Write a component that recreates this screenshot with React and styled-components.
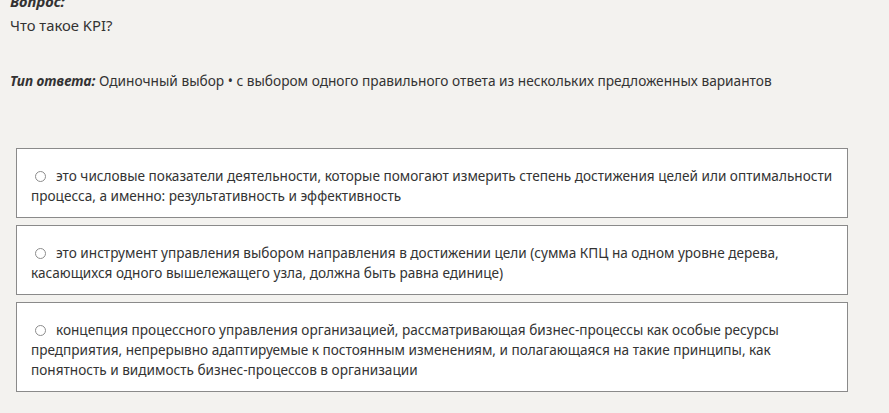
import React from 'react'
import styled, { createGlobalStyle } from 'styled-components'

const GlobalStyle = createGlobalStyle`
  html, body {
    margin: 0;
    padding: 0;
    background: #f3f2ef;
  }
  body {
    font-family: "Noto Sans", "Open Sans", sans-serif;
    color: #333;
  }
`

const answers = [
  'это числовые показатели деятельности, которые помогают измерить степень достижения целей или оптимальности процесса, а именно: результативность и эффективность',
  'это инструмент управления выбором направления в достижении цели (сумма КПЦ на одном уровне дерева, касающихся одного вышележащего узла, должна быть равна единице)',
  'концепция процессного управления организацией, рассматривающая бизнес-процессы как особые ресурсы предприятия, непрерывно адаптируемые к постоянным изменениям, и полагающаяся на такие принципы, как понятность и видимость бизнес-процессов в организации',
]

function App() {
  return (
    <Page>
      <GlobalStyle />
      <Question>
        <Label>Вопрос:</Label>
        <QuestionText>Что такое KPI?</QuestionText>
      </Question>
      <AnswerType>
        <Label>Тип ответа:</Label> Одиночный выбор • с выбором одного правильного ответа из нескольких предложенных вариантов
      </AnswerType>
      <Options>
        {answers.map((text) => (
          <Option key={text}>
            <Radio />
            {text}
          </Option>
        ))}
      </Options>
    </Page>
  )
}

export default App

const Page = styled.div`
  width: 889px;
  height: 413px;
  overflow: hidden;
  padding: 0 41px 0 10px;
  box-sizing: border-box;
`

const Question = styled.div`
  margin-top: -9px;
  font-size: 14.8px;
  line-height: 20px;
`

const Label = styled.span`
  font-weight: bold;
  font-style: italic;
`

const QuestionText = styled.div`
  margin-top: 4px;
`

const AnswerType = styled.div`
  margin-top: 36px;
  font-size: 13.7px;
  line-height: 20px;
`

const Options = styled.div`
  margin-top: 57px;
  margin-left: 6px;
  display: flex;
  flex-direction: column;
  gap: 7px;
`

const Option = styled.div`
  background: #fff;
  border: 1px solid #8a8a8a;
  padding: 17px 14px 11px;
  font-size: 13.6px;
  line-height: 20px;
  color: #333;
`

const Radio = styled.span`
  display: inline-block;
  width: 9px;
  height: 9px;
  border: 1px solid #8c8c8c;
  border-radius: 50%;
  margin: 0 10px 0 4px;
  vertical-align: -1px;
`
